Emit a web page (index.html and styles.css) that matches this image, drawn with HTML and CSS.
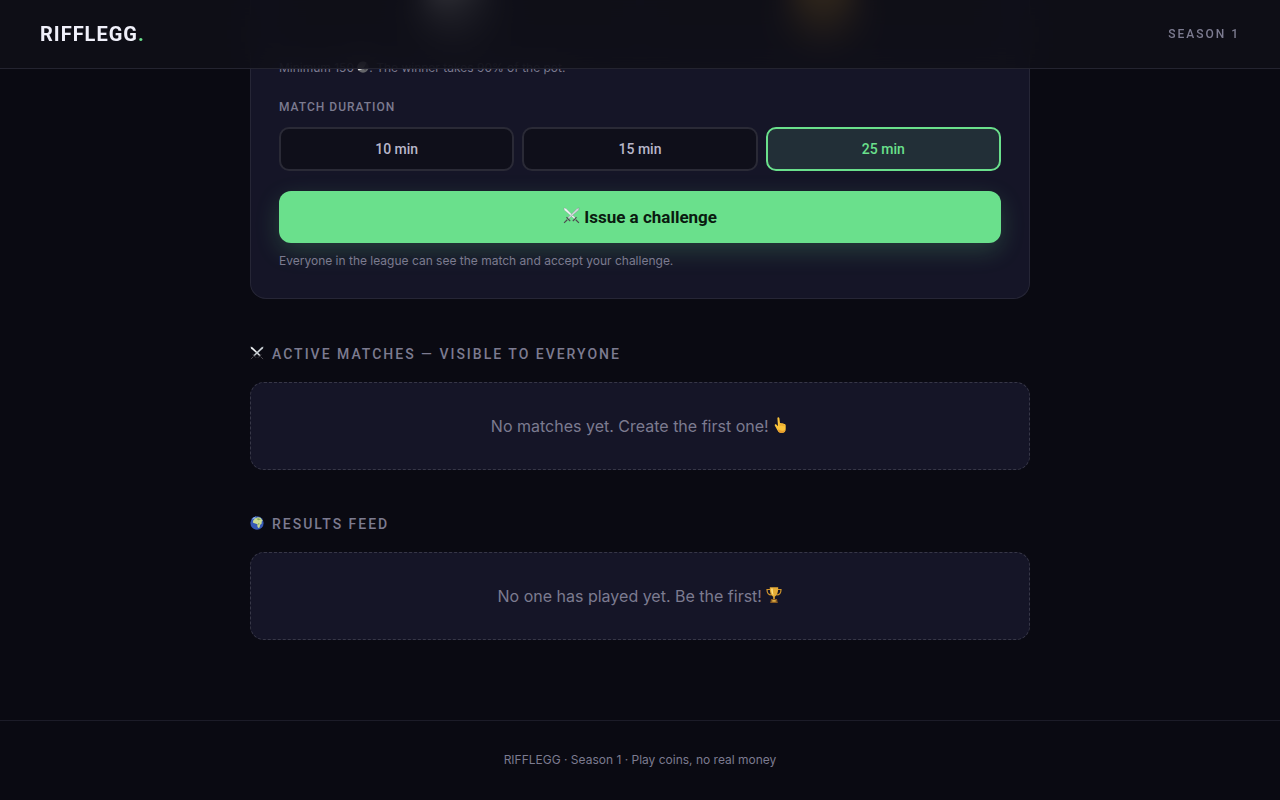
FILE: index.html
```
<!DOCTYPE html>
<html lang="en">
<head>
  <meta charset="UTF-8">
  <meta name="viewport" content="width=device-width, initial-scale=1.0">
  <title>RIFFLEGG</title>
  <link rel="stylesheet" href="styles.css">
</head>
<body>
  <!-- shared icons -->
  <svg class="sprite" aria-hidden="true">
    <symbol id="swords" viewBox="0 0 16 16">
      <path d="M.8.8l2 .6 9.200 9.300-.9.900L1.200 2.800z" fill="#f6f8fa" stroke="#7d858c" stroke-width=".3"/>
      <path d="M15.200.8l-2 .6L4 10.700l.9.900 9.900-8.800z" fill="#d3d9de" stroke="#6a7279" stroke-width=".3"/>
      <path d="M9.200 13.300l1.500-1.500 2-2.300M6.800 13.300l-1.500-1.500-2-2.300M12 12l3 3M4 12l-3 3" fill="none" stroke="#4d4a50" stroke-width="1.100"/>
    </symbol>
    <symbol id="moon" viewBox="0 0 16 16">
      <circle cx="8" cy="8" r="7.500" fill="#66676b"/>
      <path d="M8 .5a7.500 7.500 0 0 0-6 12C7 12 11 8 12.500 2A7.500 7.500 0 0 0 8 .5z" fill="#e2e2df"/>
      <circle cx="11" cy="11" r="1.500" fill="#4a4b4f"/>
    </symbol>
    <symbol id="coin" viewBox="0 0 16 16">
      <circle cx="8" cy="8" r="7.500" fill="#c88a24"/>
      <circle cx="8" cy="8" r="5" fill="#e0a637"/>
    </symbol>
    <symbol id="globe" viewBox="0 0 16 16">
      <circle cx="8" cy="8" r="7.600" fill="#3659b5"/>
      <path d="M2 4a7.600 7.600 0 0 1 5-3.400L5 3.500z" fill="#8db4ec"/>
      <path d="M3.500 5.500l2.500-3 3-1 3 .6 2.500 3.300-1.300 1.200.3 1.700-2 2-.5 2.700-1.700.8-1-2.500.3-2L6 8.500l-2.500-.7z" fill="#cbdc93"/>
      <path d="M7 3l3-.5 2.500 1.500-3 .8zM9 8l2 .5-1 2z" fill="#86a652"/>
    </symbol>
    <symbol id="finger" viewBox="0 0 16 16">
      <path d="M4.400 1.300C4.400 0 6.200 0 6.400 1.300l.6 5c1-.7 1.700-.4 2 .2.900-.5 1.600-.1 1.900.6 1-.4 1.800.3 1.800 1.400v3.500c0 2.200-1.100 3.700-3 3.700H7.600c-1.400 0-2.200-.8-2.900-2L1.900 8.800C1.300 7.600 2.400 6.800 3.300 7.500l1.700 1.800z" fill="#fbc43b"/>
      <path d="M7 6.500l.2 2.300M9 6.800l.1 2.300M10.900 7.300v2" stroke="#d98b20" stroke-width=".6" fill="none"/>
      <path d="M5.400 12c2 2 5 2.200 7 .8-.5 1.900-1.500 2.900-2.700 2.900H7.600c-1 0-1.900-.8-2.400-1.700z" fill="#e99c2c"/>
    </symbol>
    <symbol id="trophy" viewBox="0 0 16 16">
      <path d="M4 2.500H1c0 3.500 1.500 5.500 4.500 5.500M12 2.500h3c0 3.500-1.500 5.500-4.500 5.500" fill="none" stroke="#cf942c" stroke-width="1.200"/>
      <path d="M3.800.3h8.400c0 4.700-.8 8.200-3.400 9.400v2.500H7.200V9.700C4.600 8.500 3.800 5 3.800.3z" fill="#e5ab35"/>
      <path d="M5.200 1.500h1.500c0 3 .4 5.500 1.100 7C5.900 7.500 5.200 5 5.200 1.500z" fill="#ffe58c"/>
      <path d="M5 12h6l.8 4H4.200z" fill="#8a5a20"/>
      <path d="M6.300 13.200h3.400v1.400H6.300z" fill="#efc04e"/>
    </symbol>
  </svg>

  <header class="topbar">
    <a class="logo" href="#">RIFFLEGG<span>.</span></a>
    <div class="season">Season 1</div>
  </header>

  <main class="container">
    <section class="card">
      <div class="stakes">
        <div class="stake"><svg class="stake-icon"><use href="#moon"/></svg></div>
        <div class="stake"><svg class="stake-icon"><use href="#coin"/></svg></div>
      </div>
      <p class="hint">Minimum 150 <svg class="icon"><use href="#moon"/></svg>. The winner takes 90% of the pot.</p>

      <div class="label" id="duration-label">Match duration</div>
      <div class="durations" role="group" aria-labelledby="duration-label">
        <button class="duration" type="button">10 min</button>
        <button class="duration" type="button">15 min</button>
        <button class="duration active" type="button">25 min</button>
      </div>

      <button class="challenge" type="button"><svg class="icon"><use href="#swords"/></svg> Issue a challenge</button>
      <p class="hint">Everyone in the league can see the match and accept your challenge.</p>
    </section>

    <section class="block">
      <h2><svg class="icon"><use href="#swords"/></svg>Active matches — visible to everyone</h2>
      <div class="empty">No matches yet. Create the first one! <svg class="icon"><use href="#finger"/></svg></div>
    </section>

    <section class="block">
      <h2><svg class="icon"><use href="#globe"/></svg>Results feed</h2>
      <div class="empty">No one has played yet. Be the first! <svg class="icon"><use href="#trophy"/></svg></div>
    </section>
  </main>

  <footer>RIFFLEGG · Season 1 · Play coins, no real money</footer>

  <script>
    var durations = document.querySelectorAll(".duration");
    durations.forEach(function(button) {
      button.addEventListener("click", function() {
        durations.forEach(function(b) { b.classList.remove("active"); });
        button.classList.add("active");
      });
    });
  </script>
</body>
</html>
```
FILE: styles.css
```
* {
  box-sizing: border-box;
  margin: 0;
  padding: 0;
}

body {
  background: #0a0a12;
  color: #f0f0fa;
  font-family: Inter, sans-serif;
  font-size: 16px;
}

.sprite {
  display: none;
}

.icon {
  width: 1em;
  height: 1em;
  vertical-align: -1px;
}

.topbar {
  position: fixed;
  top: 0;
  left: 0;
  right: 0;
  z-index: 10;
  display: flex;
  justify-content: space-between;
  align-items: center;
  padding: 20px 40px;
  background: rgba(15, 15, 24, 0.85);
  backdrop-filter: blur(16px);
  border-bottom: 1px solid #242430;
}

.logo {
  font-family: Roboto, sans-serif;
  font-size: 20px;
  line-height: 28px;
  font-weight: 700;
  letter-spacing: 1px;
  color: #f0f0fa;
  text-decoration: none;
}

.logo span {
  color: #6ae08c;
}

.season {
  font-family: Roboto, sans-serif;
  font-size: 12px;
  font-weight: 500;
  letter-spacing: 2px;
  text-transform: uppercase;
  color: #7c7b90;
}

.container {
  max-width: 828px;
  margin: 0 auto;
  padding: 0 24px 80px;
}

.card {
  background: #151527;
  border: 1px solid #262636;
  border-top: none;
  border-radius: 0 0 16px 16px;
  padding: 0 28px 28px;
}

.stakes,
.durations {
  display: grid;
  grid-template-columns: repeat(2, 1fr);
  gap: 8px;
}

.stake {
  height: 48px;
  background: #0f0f1a;
  border-radius: 0 0 10px 10px;
  text-align: center;
}

.stake-icon {
  width: 72px;
  height: 72px;
  margin-top: -36px;
  filter: blur(12px);
}

.hint {
  margin-top: 12px;
  font-size: 12px;
  line-height: 16px;
  color: #7c7b90;
}

.label {
  margin: 23px 0 12px;
  font-family: Roboto, sans-serif;
  font-size: 12px;
  line-height: 16px;
  font-weight: 500;
  letter-spacing: 1px;
  text-transform: uppercase;
  color: #7c7b90;
}

.durations {
  grid-template-columns: repeat(3, 1fr);
}

.duration {
  padding: 10px;
  background: #0f0f1a;
  border: 2px solid #2a2a36;
  border-radius: 10px;
  color: #b8b7ca;
  font-family: Roboto, sans-serif;
  font-size: 14px;
  line-height: 20px;
  font-weight: 500;
  cursor: pointer;
}

.duration.active {
  background: #222f37;
  border-color: #6ae08c;
  color: #6ae08c;
}

.challenge {
  width: 100%;
  margin-top: 20px;
  padding: 14px;
  background: #6ae08c;
  border: none;
  border-radius: 12px;
  box-shadow: 0 8px 24px rgba(106, 224, 140, 0.2);
  color: #0a1a10;
  font-family: Roboto, sans-serif;
  font-size: 17px;
  line-height: 24px;
  font-weight: 700;
  cursor: pointer;
}

.challenge + .hint {
  margin-top: 10px;
  padding-bottom: 1px;
}

.block {
  margin-top: 45px;
}

.block + .block {
  margin-top: 44px;
}

h2 {
  margin-bottom: 18px;
  font-family: Roboto, sans-serif;
  font-size: 14px;
  line-height: 20px;
  font-weight: 500;
  letter-spacing: 2px;
  text-transform: uppercase;
  color: #7c7b90;
}

h2 .icon {
  margin-right: 8px;
}

.empty {
  padding: 31px 24px;
  background: #151527;
  border: 1px dashed #373747;
  border-radius: 14px;
  text-align: center;
  line-height: 24px;
  color: #7c7b90;
}

footer {
  padding: 31px 24px;
  border-top: 1px solid #1c1c28;
  text-align: center;
  font-size: 12px;
  line-height: 16px;
  color: #7c7b90;
}
```
